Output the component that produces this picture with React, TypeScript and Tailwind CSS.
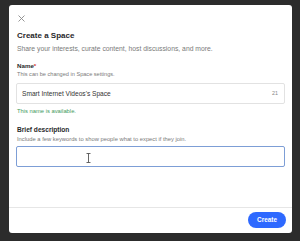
import React from "react";

export default function App() {
  return (
    <div className="w-[300px] h-[241px] bg-[#2c2c2c] pt-[5px] pl-[9px] overflow-hidden" style={{ fontFamily: '"Liberation Sans", Arial, sans-serif' }}>
      <div className="w-[283px] h-[228px] bg-white rounded-[3px] flex flex-col">
        <div className="px-[7px] pt-[10px] flex-1 flex flex-col">
          <svg width="7" height="7" viewBox="0 0 7 7" className="ml-[2px]" >
            <path d="M0.5 0.5 L6.5 6.5 M6.5 0.5 L0.5 6.5" stroke="#8a8a8a" strokeWidth="0.9" />
          </svg>
          <div className="mt-[9px] ml-[1px] text-[8px] leading-[10px] font-bold text-[#282829]">Create a Space</div>
          <div className="mt-[4px] ml-[1px] text-[6.8px] leading-[8px] text-[#7a7a7a]">Share your interests, curate content, host discussions, and more.</div>
          <div className="mt-[9px] ml-[1px] text-[6.2px] leading-[8px] font-bold text-[#282829]">Name<span className="text-[#d4382c]">*</span></div>
          <div className="mt-[1px] ml-[1px] text-[5.6px] leading-[7px] text-[#7a7a7a]">This can be changed in Space settings.</div>
          <div className="mt-[5px] h-[21px] border border-[#e2e2e2] rounded-[2px] flex items-center justify-between pl-[5px] pr-[6px]">
            <span className="text-[6.6px] text-[#333]">Smart Internet Videos's Space</span>
            <span className="text-[5.4px] text-[#888]">21</span>
          </div>
          <div className="mt-[4px] ml-[1px] text-[5.8px] leading-[7px] text-[#3f9a5c]">This name is available.</div>
          <div className="mt-[11px] ml-[1px] text-[6.6px] leading-[8px] font-bold text-[#282829]">Brief description</div>
          <div className="mt-[2px] ml-[1px] text-[5.8px] leading-[7px] text-[#7a7a7a]">Include a few keywords to show people what to expect if they join.</div>
          <div className="mt-[3px] h-[21px] border border-[#7d9ed6] rounded-[2px] relative">
            <svg width="5" height="10" viewBox="0 0 5 10" className="absolute left-[69px] top-[6px]">
              <path d="M0.5 0.5 H4.5 M2.5 0.5 V9.5 M0.5 9.5 H4.5" stroke="#555" strokeWidth="0.9" fill="none" />
            </svg>
          </div>
        </div>
        <div className="border-t border-[#e6e6e6] pt-[4px] pb-[5px] pr-[6px] flex justify-end">
          <div className="w-[38px] h-[16px] rounded-full bg-[#2e69ff] text-white text-[6.4px] font-bold flex items-center justify-center">Create</div>
        </div>
      </div>
    </div>
  );
}
